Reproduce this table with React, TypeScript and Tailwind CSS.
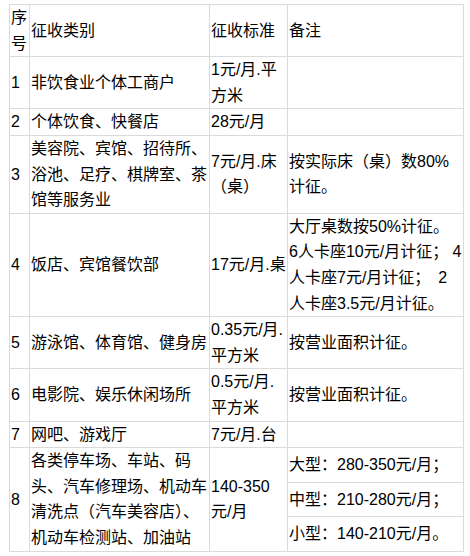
const rows = [
  { no: "1", kind: "非饮食业个体工商户", std: "1元/月.平方米", note: "" },
  { no: "2", kind: "个体饮食、快餐店", std: "28元/月", note: "" },
  {
    no: "3",
    kind: "美容院、宾馆、招待所、浴池、足疗、棋牌室、茶馆等服务业",
    std: "7元/月.床（桌）",
    note: "按实际床（桌）数80%计征。",
  },
  { no: "4", kind: "饭店、宾馆餐饮部", std: "17元/月.桌", note: "" },
  { no: "5", kind: "游泳馆、体育馆、健身房", std: "0.35元/月.平方米", note: "按营业面积计征。" },
  { no: "6", kind: "电影院、娱乐休闲场所", std: "0.5元/月.平方米", note: "按营业面积计征。" },
  { no: "7", kind: "网吧、游戏厅", std: "7元/月.台", note: "" },
];

const parking = ["大型：280-350元/月；", "中型：210-280元/月；", "小型：140-210元/月。"];

const td = "border border-[#dadada] px-px py-0 align-middle";

export default function App() {
  return (
    <div
      className="bg-white pl-[9px] pt-[4px] text-black text-base leading-[25.6px]"
      style={{ fontFamily: '"Liberation Sans", "Noto Sans CJK SC", sans-serif' }}
    >
      <table className="table-fixed border-collapse w-[454px]">
        <colgroup>
          <col className="w-[20px]" />
          <col className="w-[180px]" />
          <col className="w-[78px]" />
          <col className="w-[176px]" />
        </colgroup>
        <tbody>
          <tr>
            <td className={td}>序号</td>
            <td className={td}>征收类别</td>
            <td className={td}>征收标准</td>
            <td className={td}>备注</td>
          </tr>
          {rows.slice(0, 3).map((r) => (
            <tr key={r.no}>
              <td className={td}>{r.no}</td>
              <td className={td}>{r.kind}</td>
              <td className={td}>{r.std}</td>
              <td className={td}>{r.note}</td>
            </tr>
          ))}
          <tr>
            <td className={td}>4</td>
            <td className={td}>饭店、宾馆餐饮部</td>
            <td className={td}>17元/月.桌</td>
            <td className={td}>
              大厅桌数按50%计征。
              <br />
              6人卡座10元/月计征； 4
              <br />
              人卡座7元/月计征；　2
              <br />
              人卡座3.5元/月计征。
            </td>
          </tr>
          {rows.slice(4).map((r) => (
            <tr key={r.no}>
              <td className={td}>{r.no}</td>
              <td className={td}>{r.kind}</td>
              <td className={td}>{r.std}</td>
              <td className={td}>{r.note}</td>
            </tr>
          ))}
          <tr>
            <td className={td}>8</td>
            <td className={td}>各类停车场、车站、码头、汽车修理场、机动车清洗点（汽车美容店）、机动车检测站、加油站</td>
            <td className={td}>140-350元/月</td>
            <td className="border border-[#dadada] p-0 align-middle">
              <table className="w-full border-collapse">
                <tbody>
                  {parking.map((p, i) => (
                    <tr key={p} className={i < 2 ? "border-b border-[#dadada]" : ""}>
                      <td className="px-px py-1">{p}</td>
                    </tr>
                  ))}
                </tbody>
              </table>
            </td>
          </tr>
        </tbody>
      </table>
    </div>
  );
}
